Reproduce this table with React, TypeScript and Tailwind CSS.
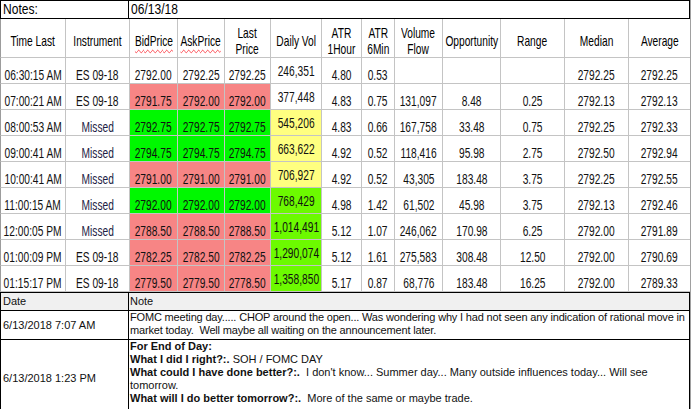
import clsx from "clsx";

type Row = {
  cells: string[];
  price?: "red" | "green";
  vol?: "yellow" | "green";
};

const rows: Row[] = [
  { cells: ["06:30:15 AM", "ES 09-18", "2792.00", "2792.25", "2792.25", "246,351", "4.80", "0.53", "", "", "", "2792.25", "2792.25"] },
  { cells: ["07:00:21 AM", "ES 09-18", "2791.75", "2792.00", "2792.00", "377,448", "4.83", "0.75", "131,097", "8.48", "0.25", "2792.13", "2792.13"], price: "red" },
  { cells: ["08:00:53 AM", "Missed", "2792.75", "2792.75", "2792.75", "545,206", "4.83", "0.66", "167,758", "33.48", "0.75", "2792.25", "2792.33"], price: "green", vol: "yellow" },
  { cells: ["09:00:41 AM", "Missed", "2794.75", "2794.75", "2794.75", "663,622", "4.92", "0.52", "118,416", "95.98", "2.75", "2792.50", "2792.94"], price: "green", vol: "yellow" },
  { cells: ["10:00:41 AM", "Missed", "2791.00", "2791.00", "2791.00", "706,927", "4.92", "0.52", "43,305", "183.48", "3.75", "2792.25", "2792.55"], price: "red", vol: "yellow" },
  { cells: ["11:00:15 AM", "Missed", "2792.00", "2792.00", "2792.00", "768,429", "4.98", "1.42", "61,502", "45.98", "3.75", "2792.13", "2792.46"], price: "green", vol: "green" },
  { cells: ["12:00:05 PM", "Missed", "2788.50", "2788.50", "2788.50", "1,014,491", "5.12", "1.07", "246,062", "170.98", "6.25", "2792.00", "2791.89"], price: "red", vol: "green" },
  { cells: ["01:00:09 PM", "ES 09-18", "2782.25", "2782.50", "2782.25", "1,290,074", "5.12", "1.61", "275,583", "308.48", "12.50", "2792.00", "2790.69"], price: "red", vol: "green" },
  { cells: ["01:15:17 PM", "ES 09-18", "2779.50", "2779.50", "2778.50", "1,358,850", "5.17", "0.87", "68,776", "183.48", "16.25", "2792.00", "2789.33"], price: "red", vol: "green" },
];

const headers: { label: string[]; squiggle?: boolean }[] = [
  { label: ["Time Last"] },
  { label: ["Instrument"] },
  { label: ["BidPrice"], squiggle: true },
  { label: ["AskPrice"], squiggle: true },
  { label: ["Last", "Price"] },
  { label: ["Daily Vol"] },
  { label: ["ATR", "1Hour"] },
  { label: ["ATR", "6Min"] },
  { label: ["Volume", "Flow"] },
  { label: ["Opportunity"] },
  { label: ["Range"] },
  { label: ["Median"] },
  { label: ["Average"] },
];

function cellBg(row: Row, col: number) {
  if (col >= 2 && col <= 4) {
    if (row.price === "red") return "bg-[#f78585]";
    if (row.price === "green") return "bg-[#00f800]";
  }
  if (col === 5) {
    if (row.vol === "yellow") return "bg-[#ffff80]";
    if (row.vol === "green") return "bg-[#6cfa00]";
  }
  return "bg-white";
}

function GridCell({ col, className, children }: { col: number; className?: string; children: React.ReactNode }) {
  return (
    <div
      className={clsx(
        "flex justify-center border-b border-[#c4c4c4]",
        col === 0 && "border-l border-l-[#9c9c9c]",
        col < 12 && "border-r",
        className,
      )}
    >
      {children}
    </div>
  );
}

export default function App() {
  return (
    <div className="h-[409px] w-[691px] overflow-hidden border-r border-[#a0a0a0] bg-white font-['Liberation_Sans',Arial,sans-serif] text-black">
      {/* notes header */}
      <div className="flex h-[19px] border border-black text-[14px] leading-[17px]">
        <div className="w-[128px] shrink-0 border-r border-black pl-[2px]">
          <span className="inline-block origin-left scale-x-[0.86]">Notes:</span>
        </div>
        <div className="flex-1 pl-[2px]">
          <span className="inline-block origin-left scale-x-[0.86]">06/13/18</span>
        </div>
      </div>

      {/* trade grid */}
      <div className="grid grid-cols-[66px_64px_48px_47px_46px_51px_40px_33px_48px_58px_64px_64px_61px] text-[15px]">
        {headers.map((h, i) => (
          <GridCell key={h.label.join()} col={i} className="h-[39px] items-center pt-[5px]">
            <span className="inline-block scale-x-[0.68] whitespace-nowrap text-center leading-[16px]">
              {h.label.map((line) => (
                <span
                  key={line}
                  className={clsx(
                    "block",
                    h.squiggle && "underline decoration-red-500 decoration-wavy decoration-1 underline-offset-[3px]",
                  )}
                >
                  {line}
                </span>
              ))}
            </span>
          </GridCell>
        ))}
        {rows.map((row) =>
          row.cells.map((value, i) => (
            <GridCell
              key={row.cells[0] + i}
              col={i}
              className={clsx(
                "h-[26px]",
                cellBg(row, i),
                i === 5 ? "items-center pb-[1px]" : "items-end pb-[1px]",
              )}
            >
              <span
                className={clsx(
                  "inline-block scale-x-[0.68] whitespace-nowrap leading-[15px]",
                  value === "Missed" ? "text-[#1e1e46]" : "text-[#111]",
                )}
              >
                {value}
              </span>
            </GridCell>
          )),
        )}
      </div>

      {/* journal notes */}
      <div className="border-x border-t border-black text-[11px] leading-[13px] text-[#111]">
        <div className="flex h-[18px] border-b border-black bg-[#f0f0f0]">
          <div className="flex w-[128px] shrink-0 items-center border-r border-black pl-[2px]">Date</div>
          <div className="flex flex-1 items-center pl-[1px]">Note</div>
        </div>
        <div className="flex h-[29px] border-b border-black">
          <div className="flex w-[128px] shrink-0 items-center border-r border-black pl-[2px]">6/13/2018 7:07 AM</div>
          <div className="min-w-0 flex-1 overflow-hidden whitespace-pre pl-[1px] tracking-[-0.17px]">
            <div>FOMC meeting day..... CHOP around the open... Was wondering why I had not seen any indication of rational move in</div>
            <div>market today.  Well maybe all waiting on the announcement later.</div>
          </div>
        </div>
        <div className="flex h-[78px] border-b border-black">
          <div className="flex w-[128px] shrink-0 items-center border-r border-black pl-[2px]">6/13/2018 1:23 PM</div>
          <div className="min-w-0 flex-1 whitespace-pre pl-[1px]">
            <div className="font-bold">For End of Day:</div>
            <div>
              <b>What I did I right?:.</b> SOH / FOMC DAY
            </div>
            <div>
              <b>What could I have done better?:.</b>  I don't know... Summer day... Many outside influences today... Will see
            </div>
            <div>tomorrow.</div>
            <div>
              <b>What will I do better tomorrow?:.</b>  More of the same or maybe trade.
            </div>
          </div>
        </div>
      </div>
    </div>
  );
}
